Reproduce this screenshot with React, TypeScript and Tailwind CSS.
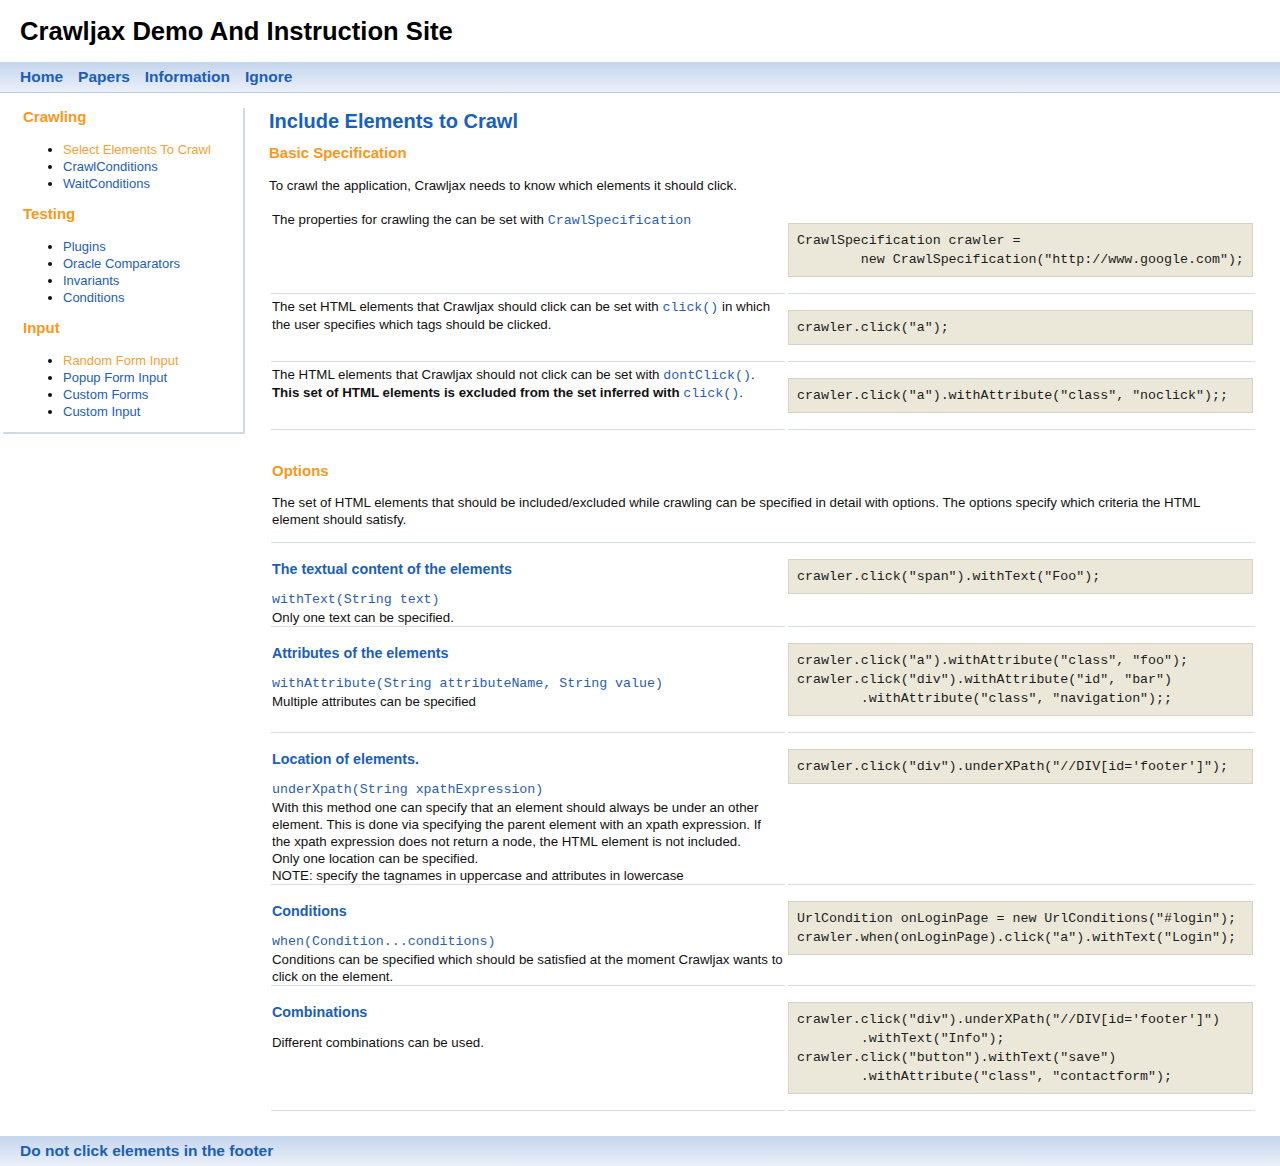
import type { ReactNode } from 'react'

const orange = 'text-[#f7981d]'
const code = "font-['Liberation_Mono','Courier_New',monospace] text-[13.3px] leading-none text-[#2a5db3]"

function Row({ left, snippet, textTop }: { left: ReactNode; snippet: string; textTop?: boolean }) {
  return (
    <div className="grid grid-cols-[514px_467px] gap-x-[3px]">
      <div className={`border-b border-[#d6dde7] pl-px ${textTop ? 'pt-[4px]' : 'pt-px'}`}>{left}</div>
      <div className="border-b border-[#d6dde7]">
        <pre className="mt-4 mb-4 mr-[2px] border border-[#d6d3c3] bg-[#ebe8d9] px-2 py-[7px] font-['Liberation_Mono','Courier_New',monospace] text-[13.3px] leading-[19px] text-[#1c1c1c]">
          {snippet}
        </pre>
      </div>
    </div>
  )
}

function Option({ title, sig, children }: { title: string; sig?: string; children: ReactNode }) {
  return (
    <div>
      <h4 className="mt-[17px] mb-[13px] text-[14.3px] leading-[17px] font-bold text-[#1a5eb8]">{title}</h4>
      {sig ? <div className={`${code} !leading-[18px]`}>{sig}</div> : null}
      <p className="whitespace-nowrap text-[13.3px] leading-[17px]">{children}</p>
    </div>
  )
}

const sidebar = [
  { title: 'Crawling', items: ['Select Elements To Crawl', 'CrawlConditions', 'WaitConditions'], active: 0 },
  { title: 'Testing', items: ['Plugins', 'Oracle Comparators', 'Invariants', 'Conditions'], active: -1 },
  { title: 'Input', items: ['Random Form Input', 'Popup Form Input', 'Custom Forms', 'Custom Input'], active: 0 },
]

export default function App() {
  return (
    <div className="min-h-[1166px] bg-white font-['Liberation_Sans',Arial,sans-serif] text-[#111]">
      <header className="flex h-[62px] items-center px-5">
        <h1 className="text-[25.6px] font-bold text-black">Crawljax Demo And Instruction Site</h1>
      </header>

      <nav className="flex h-[31px] items-center gap-[15px] border-b border-[#bfcde2] bg-gradient-to-b from-[#c5d5ed] to-[#ebf0f9] px-5 text-[15.5px] font-bold text-[#1a5eb8]">
        <a href="#">Home</a>
        <a href="#">Papers</a>
        <a href="#">Information</a>
        <a href="#">Ignore</a>
      </nav>

      <div className="mt-[15px] flex items-start">
        <aside className="ml-[3px] w-[242px] shrink-0 border-r-2 border-b-2 border-[#cfd9ea] pb-3 pl-5">
          {sidebar.map((sec, i) => (
            <div key={sec.title} className={i > 0 ? 'mt-[13px]' : ''}>
              <h3 className={`text-[15px] leading-[18px] font-bold ${orange}`}>{sec.title}</h3>
              <ul className="mt-[15px] list-disc pl-10 text-[13px] leading-[17px]">
                {sec.items.map((item, j) => (
                  <li key={item}>
                    <a href="#" className={j === sec.active ? 'text-[#f6a035]' : 'text-[#1d5cba]'}>
                      {item}
                    </a>
                  </li>
                ))}
              </ul>
            </div>
          ))}
        </aside>

        <main className="ml-6 w-[986px] pt-px">
          <h2 className="text-[20px] leading-[24px] font-bold text-[#1660c2]">Include Elements to Crawl</h2>
          <h3 className={`mt-[11px] text-[15px] leading-[18px] font-bold ${orange}`}>Basic Specification</h3>
          <p className="mt-[15px] text-[13.3px] leading-[17px]">
            To crawl the application, Crawljax needs to know which elements it should click.
          </p>

          <div className="mt-[13px] pl-[2px]">
            <Row
              textTop
              left={
                <p className="text-[13.3px] leading-[17px]">
                  The properties for crawling the can be set with <span className={code}>CrawlSpecification</span>
                </p>
              }
              snippet={'CrawlSpecification crawler =\n        new CrawlSpecification("http://www.google.com");'}
            />
            <Row
              textTop
              left={
                <p className="whitespace-nowrap text-[13.3px] leading-[18px]">
                  The set HTML elements that Crawljax should click can be set with <span className={code}>click()</span> in which
                  <br />
                  the user specifies which tags should be clicked.
                </p>
              }
              snippet={'crawler.click("a");'}
            />
            <Row
              textTop
              left={
                <p className="whitespace-nowrap text-[13.3px] leading-[18px]">
                  The HTML elements that Crawljax should not click can be set with <span className={code}>dontClick()</span>.
                  <br />
                  <b>This set of HTML elements is excluded from the set inferred with</b> <span className={code}>click()</span>.
                </p>
              }
              snippet={'crawler.click("a").withAttribute("class", "noclick");;'}
            />

            <div className="border-b border-[#d6dde7] pt-[32px] pb-[14px] pl-px">
              <h3 className={`text-[15px] leading-[18px] font-bold ${orange}`}>Options</h3>
              <p className="mt-[14px] text-[13.3px] leading-[17px]">
                The set of HTML elements that should be included/excluded while crawling can be specified in detail with options. The options specify which criteria the HTML
                <br />
                element should satisfy.
              </p>
            </div>

            <Row
              left={
                <Option title="The textual content of the elements" sig="withText(String text)">
                  Only one text can be specified.
                </Option>
              }
              snippet={'crawler.click("span").withText("Foo");'}
            />
            <Row
              left={
                <Option title="Attributes of the elements" sig="withAttribute(String attributeName, String value)">
                  Multiple attributes can be specified
                </Option>
              }
              snippet={'crawler.click("a").withAttribute("class", "foo");\ncrawler.click("div").withAttribute("id", "bar")\n        .withAttribute("class", "navigation");;'}
            />
            <Row
              left={
                <Option title="Location of elements." sig="underXpath(String xpathExpression)">
                  With this method one can specify that an element should always be under an other
                  <br />
                  element. This is done via specifying the parent element with an xpath expression. If
                  <br />
                  the xpath expression does not return a node, the HTML element is not included.
                  <br />
                  Only one location can be specified.
                  <br />
                  NOTE: specify the tagnames in uppercase and attributes in lowercase
                </Option>
              }
              snippet={'crawler.click("div").underXPath("//DIV[id=\'footer\']");'}
            />
            <Row
              left={
                <Option title="Conditions" sig="when(Condition...conditions)">
                  Conditions can be specified which should be satisfied at the moment Crawljax wants to
                  <br />
                  click on the element.
                </Option>
              }
              snippet={'UrlCondition onLoginPage = new UrlConditions("#login");\ncrawler.when(onLoginPage).click("a").withText("Login");'}
            />
            <Row
              left={
                <Option title="Combinations">
                  <span className="mt-[12px] block">Different combinations can be used.</span>
                </Option>
              }
              snippet={'crawler.click("div").underXPath("//DIV[id=\'footer\']")\n        .withText("Info");\ncrawler.click("button").withText("save")\n        .withAttribute("class", "contactform");'}
            />
          </div>
        </main>
      </div>

      <footer className="mt-[25px] flex h-[31px] items-center border-b border-[#bfcde2] bg-gradient-to-b from-[#c5d5ed] to-[#ebf0f9] px-5 text-[15.5px] font-bold text-[#1a5eb8]">
        <a href="#">Do not click elements in the footer</a>
      </footer>
    </div>
  )
}
